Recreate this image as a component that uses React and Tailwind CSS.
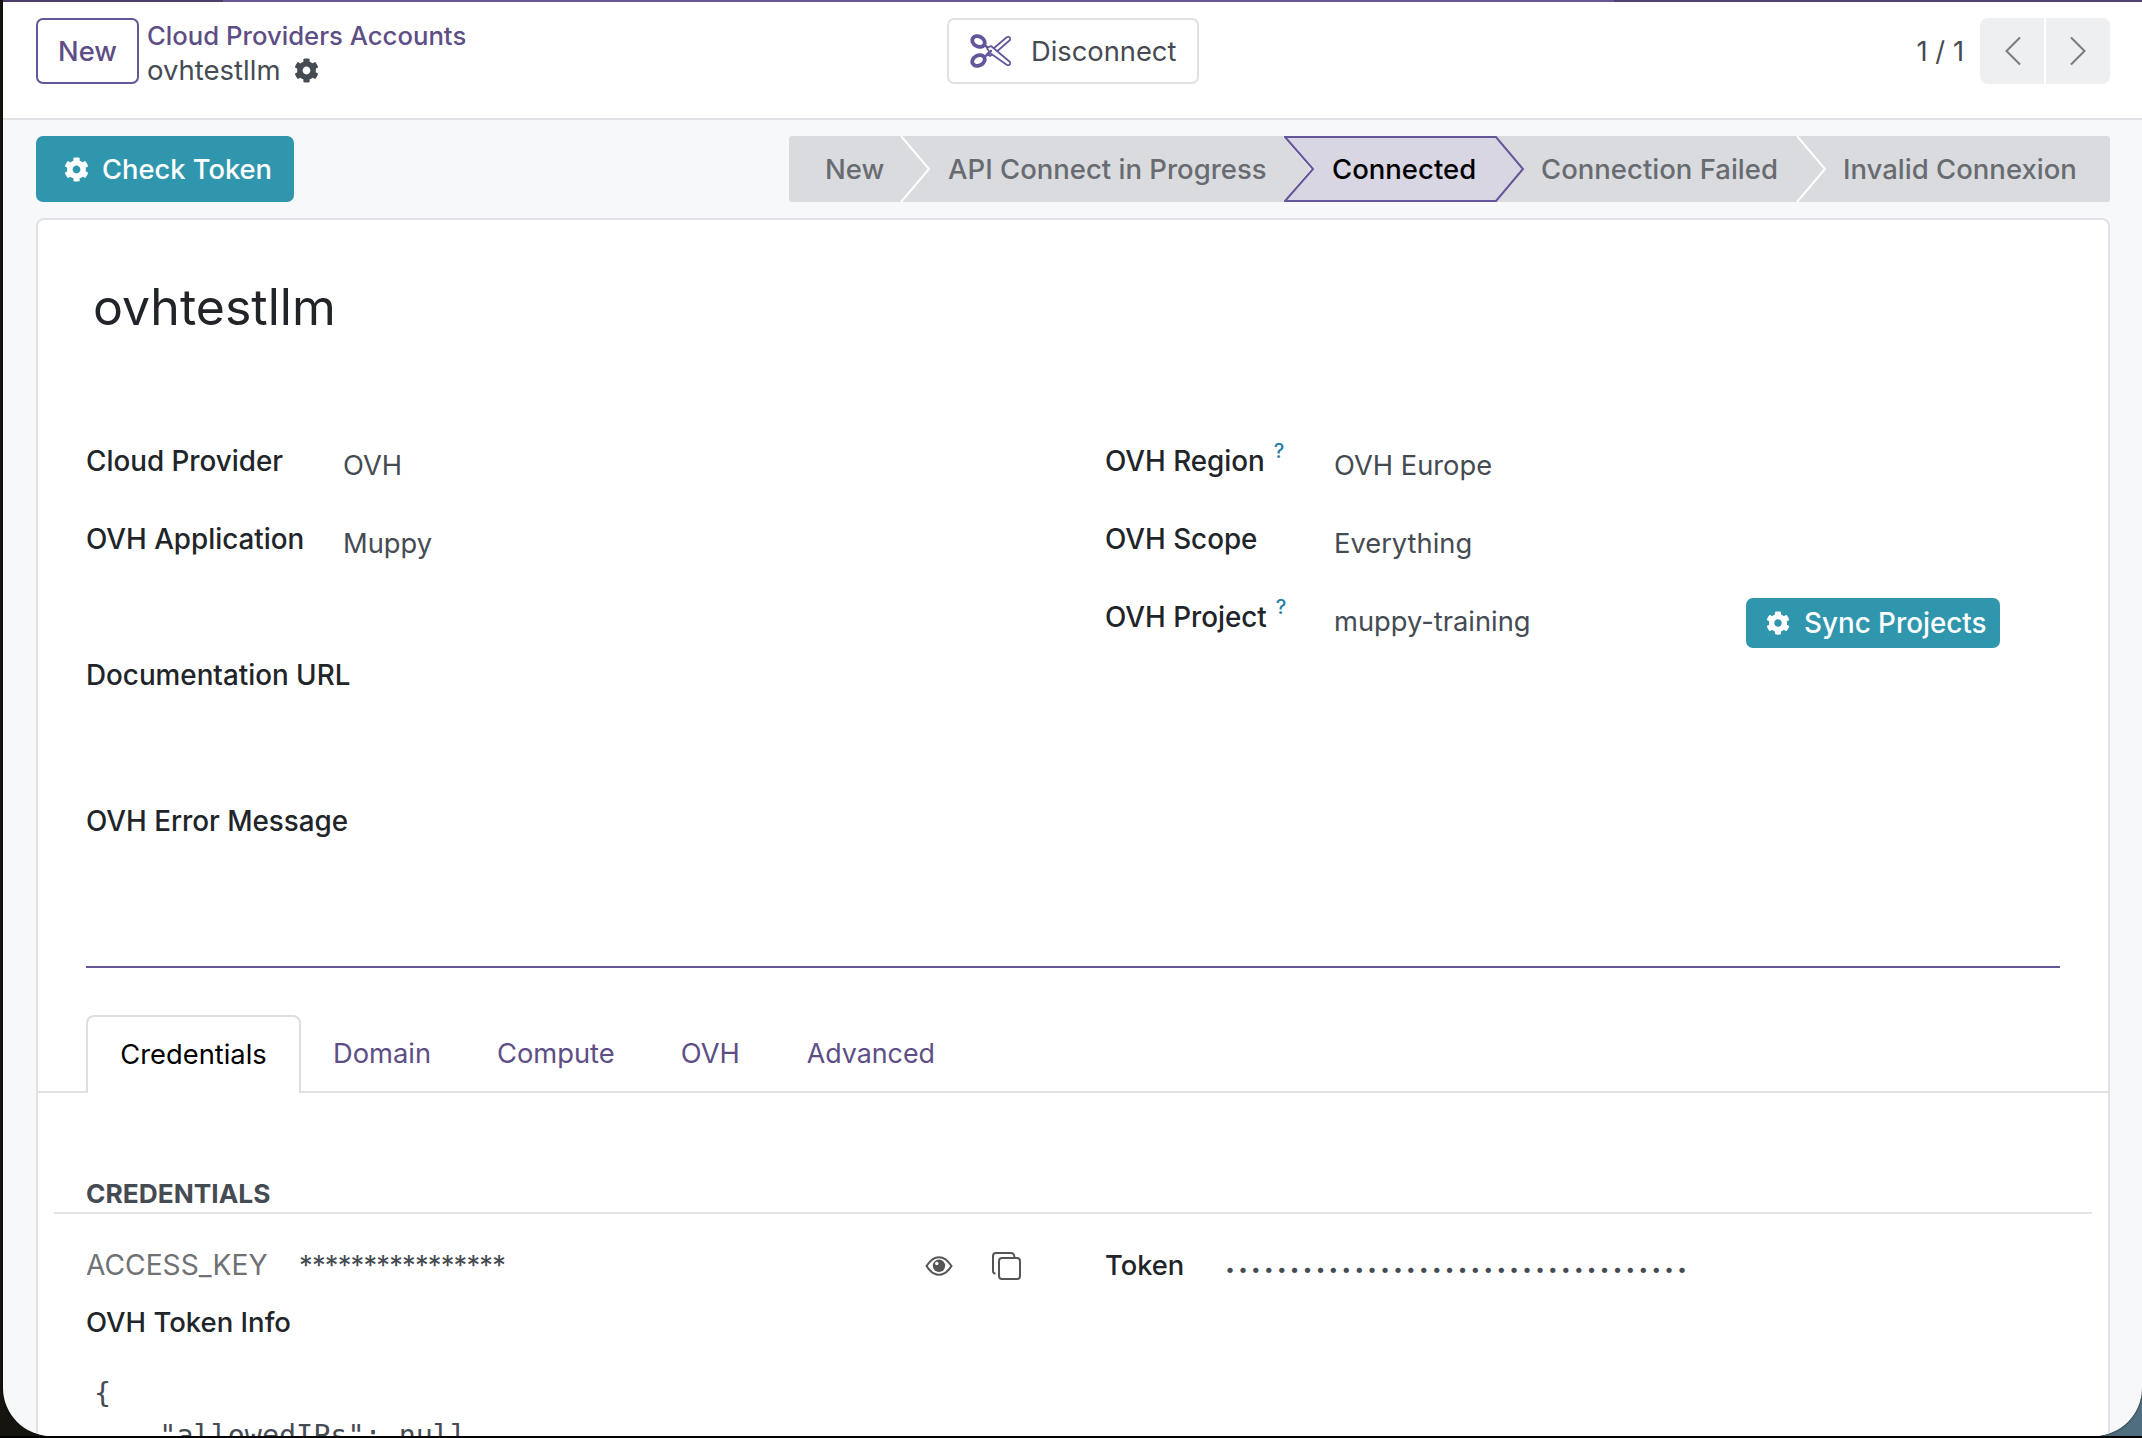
import React from "react";
import { FaCog } from "react-icons/fa";

const font = { fontFamily: "Inter, 'Noto Sans', sans-serif" };

function Scissors() {
  return (
    <svg width="42" height="34" viewBox="0 0 42 34" fill="none" stroke="#65559a" className="shrink-0">
      <ellipse cx="8.5" cy="7.5" rx="6.5" ry="5" transform="rotate(28 8.5 7.5)" strokeWidth="3.8" />
      <ellipse cx="8.5" cy="26.5" rx="6.5" ry="5" transform="rotate(-28 8.5 26.5)" strokeWidth="3.8" />
      <path d="M14 11 L20 15 M14 23 L20 19" strokeWidth="2.6" />
      <path d="M17 20 L37 3 Q41 2 40 6 L24 20 L20 22 Z" strokeWidth="1.7" strokeLinejoin="round" />
      <path d="M17 14 L21 12 L40 28 Q41 32 37 31 L20 19 Z" strokeWidth="1.7" strokeLinejoin="round" fill="#fff" />
      <circle cx="21" cy="17" r="1.2" fill="#65559a" stroke="none" />
    </svg>
  );
}

function Chevron({ dir }) {
  return (
    <svg width="18" height="30" viewBox="0 0 18 30" fill="none" stroke="#777a7e" strokeWidth="2">
      <path d={dir === "left" ? "M16 1.5 L2.5 15 L16 28.5" : "M2 1.5 L15.5 15 L2 28.5"} />
    </svg>
  );
}

function Segment({ label, width, pl, last, z }) {
  return (
    <div className="relative flex h-full items-center bg-[#d9dbdf] text-[#686c71]" style={{ width, paddingLeft: pl, zIndex: z }}>
      <span className="whitespace-nowrap">{label}</span>
      {!last && (
        <svg width="32" height="66" viewBox="0 0 32 66" fill="none" className="absolute left-full top-0 -ml-[1px]">
          <path d="M0 0 L29 33 L0 66 Z" fill="#d9dbdf" />
          <path d="M1 0 L29 33 L1 66" stroke="#ffffff" strokeWidth="2" />
        </svg>
      )}
    </div>
  );
}

function Field({ label, value, help, labelW, className = "" }) {
  return (
    <div className={`flex h-[78px] items-center ${className}`}>
      <div className="flex items-center text-[27.8px] font-medium text-[#212529]" style={{ width: labelW }}>
        <span className="whitespace-nowrap">{label}</span>
        {help && <span className="relative -top-[10px] ml-[9px] text-[20px] text-[#2a7ca3]">?</span>}
      </div>
      {value && <div className="relative top-[4px] text-[#454b52] whitespace-nowrap">{value}</div>}
    </div>
  );
}

export default function App() {
  return (
    <div className="box-border h-[1438px] w-full overflow-hidden border-b-2 border-black bg-gradient-to-r from-[#16140f] via-[#2b3a3c] to-[#4f6f80] text-[27.3px] leading-[39px]" style={font}>
      <div className="ml-[3px] flex h-full flex-col overflow-hidden rounded-b-[48px] bg-[#f7f8fa] shadow-[0_0_2px_#000]">
        <div className="flex h-[2px] shrink-0">
          <div className="w-[220px] bg-[#4c4068]" />
          <div className="flex-1 bg-[#665792]" />
          <div className="w-[528px] bg-[#4f4270]" />
        </div>
        <header className="flex h-[118px] shrink-0 items-start border-b-2 border-[#dfe1e5] bg-white pl-[33px] pr-[32px] pt-[16px]">
          <div className="flex w-[911px] items-start">
            <button className="h-[66px] w-[103px] rounded-[7px] border-2 border-[#65559a] text-[#5d4e85] font-medium">New</button>
            <div className="ml-[8px] leading-[35px]">
              <div className="text-[25.7px] font-medium text-[#5d4e85] whitespace-nowrap">Cloud Providers Accounts</div>
              <div className="flex items-center text-[27.5px] text-[#454b52]">
                <span>ovhtestllm</span>
                <FaCog className="ml-[13px] h-[25px] w-[25px] text-[#454b52]" />
              </div>
            </div>
          </div>
          <button className="flex h-[66px] w-[252px] items-center rounded-[7px] border-2 border-[#dfe1e5] bg-white pl-[21px] text-[#454b52]">
            <Scissors />
            <span className="ml-[19px]">Disconnect</span>
          </button>
          <div className="ml-auto flex items-center">
            <span className="mr-[16px] text-[#454b52] whitespace-nowrap">1 / 1</span>
            <div className="flex h-[66px] w-[130px] overflow-hidden rounded-[8px] bg-[#eeeff1]">
              <div className="flex w-[64px] items-center justify-center pl-[2px]"><Chevron dir="left" /></div>
              <div className="w-[2px] bg-white" />
              <div className="flex w-[64px] items-center justify-center"><Chevron dir="right" /></div>
            </div>
          </div>
        </header>

        <div className="mt-[16px] flex h-[66px] shrink-0 justify-between pl-[33px] pr-[32px]">
          <button className="flex h-[66px] w-[258px] items-center rounded-[7px] bg-[#2f96ad] pl-[28px] font-medium text-white">
            <FaCog className="h-[25px] w-[25px]" />
            <span className="ml-[13px]">Check Token</span>
          </button>
          <div className="flex h-[66px] overflow-hidden rounded-[3px] text-[27.5px] font-medium">
            <Segment label="New" width={112} pl={36} z={5} />
            <Segment label="API Connect in Progress" width={383} pl={47} z={4} />
            <div className="relative z-[6] flex h-full w-[212px] items-center pl-[48px] text-black">
              <svg width="242" height="66" viewBox="0 0 242 66" className="absolute left-0 top-0">
                <path d="M1 1 L212 1 L239 33 L212 65 L1 65 L29 33 Z" fill="#d9d6e3" stroke="#65559a" strokeWidth="2" />
              </svg>
              <span className="relative whitespace-nowrap">Connected</span>
            </div>
            <Segment label="Connection Failed" width={301} pl={45} z={2} />
            <Segment label="Invalid Connexion" width={313} pl={46} z={1} last />
          </div>
        </div>

        <main className="ml-[33px] mr-[32px] mt-[16px] flex-1 rounded-t-[8px] border-x-2 border-t-2 border-[#dfe1e5] bg-white">
          <div className="px-[48px]">
            <h1 className="h-[202px] pl-[7px] pt-[52px] text-[50px] leading-[70px] text-[#212529]">ovhtestllm</h1>
            <div className="grid grid-cols-[1019px_1fr]">
              <div>
                <Field label="Cloud Provider" value="OVH" labelW={257} />
                <Field label="OVH Application" value="Muppy" labelW={257} />
                <Field label="Documentation URL" labelW={400} className="mt-[58px]" />
                <Field label="OVH Error Message" labelW={400} className="mt-[68px]" />
              </div>
              <div>
                <Field label="OVH Region" help value="OVH Europe" labelW={229} />
                <Field label="OVH Scope" value="Everything" labelW={229} />
                <div className="flex items-start">
                  <Field label="OVH Project" help value="muppy-training" labelW={229} className="w-[641px]" />
                  <button className="mt-[20px] flex h-[50px] w-[254px] items-center rounded-[7px] bg-[#2f96ad] pl-[20px] text-[27.8px] font-medium text-white">
                    <FaCog className="h-[24px] w-[24px]" />
                    <span className="ml-[14px] whitespace-nowrap">Sync Projects</span>
                  </button>
                </div>
              </div>
            </div>
            <div className="mt-[106px] h-[2px] bg-[#65559a]" />
          </div>

          <div className="mt-[47px] flex h-[78px] border-b-2 border-[#dfe1e5] pl-[48px] text-[#5d4e85]">
            <div className="-mb-[2px] flex h-[78px] w-[215px] items-center justify-center rounded-t-[8px] border-x-2 border-t-2 border-[#dbdee2] bg-white pb-[2px] text-black">Credentials</div>
            <div className="flex items-center pl-[32px] pt-[1px]">Domain</div>
            <div className="flex items-center pl-[66px] pt-[1px]">Compute</div>
            <div className="flex items-center pl-[66px] pt-[1px]">OVH</div>
            <div className="flex items-center pl-[67px] pt-[1px] text-[26.8px]">Advanced</div>
          </div>

          <div className="px-[48px] pt-[82px]">
            <div className="-ml-[32px] -mr-[32px] border-b-2 border-[#e3e3e3] pl-[32px] text-[26.3px] font-bold leading-[37px] text-[#454b52]">CREDENTIALS</div>
            <div className="mt-[24px] flex h-[54px] items-center">
              <div className="flex w-[1019px] items-center">
                <span className="w-[213px] text-[28.2px] text-[#6f7174]">ACCESS_KEY</span>
                <span className="tracking-[-0.8px] text-[#454b52]">****************</span>
                <svg width="28" height="20" viewBox="0 0 28 20" className="relative top-[1px] ml-auto">
                  <path d="M1.5 10 C6 3 10 1.2 14 1.2 C18 1.2 22 3 26.5 10 C22 17 18 18.8 14 18.8 C10 18.8 6 17 1.5 10 Z" fill="none" stroke="#555" strokeWidth="2" />
                  <circle cx="14" cy="9.8" r="6.2" fill="#555" />
                  <circle cx="11.8" cy="7.5" r="1.7" fill="#fff" />
                </svg>
                <svg width="29" height="28" viewBox="0 0 29 28" fill="none" stroke="#555" strokeWidth="2" className="relative top-[1px] ml-[39px] mr-[84px]">
                  <path d="M3.5 21.5 Q1 21.5 1 19 V4 Q1 1 4 1 H19 Q22 1 22.5 5" />
                  <rect x="7" y="6" width="21" height="21" rx="3" />
                </svg>
              </div>
              <span className="text-[27.3px] font-medium text-[#212529]">Token</span>
              <span className="relative top-[4px] ml-[41px] whitespace-nowrap text-[17px] tracking-[3.35px] text-[#454b52]">{"•".repeat(36)}</span>
            </div>
            <div className="mt-[11px] text-[27.5px] font-medium text-[#212529]">OVH Token Info</div>
            <pre className="ml-[5px] mt-[31px] indent-[3px] text-[28.4px] leading-[42px] text-[#454b52]" style={{ fontFamily: "'DejaVu Sans Mono', monospace" }}>{"{\n"}<span className="block indent-0">{"    \"allowedIPs\": null"}</span></pre>
          </div>
        </main>
      </div>
    </div>
  );
}
